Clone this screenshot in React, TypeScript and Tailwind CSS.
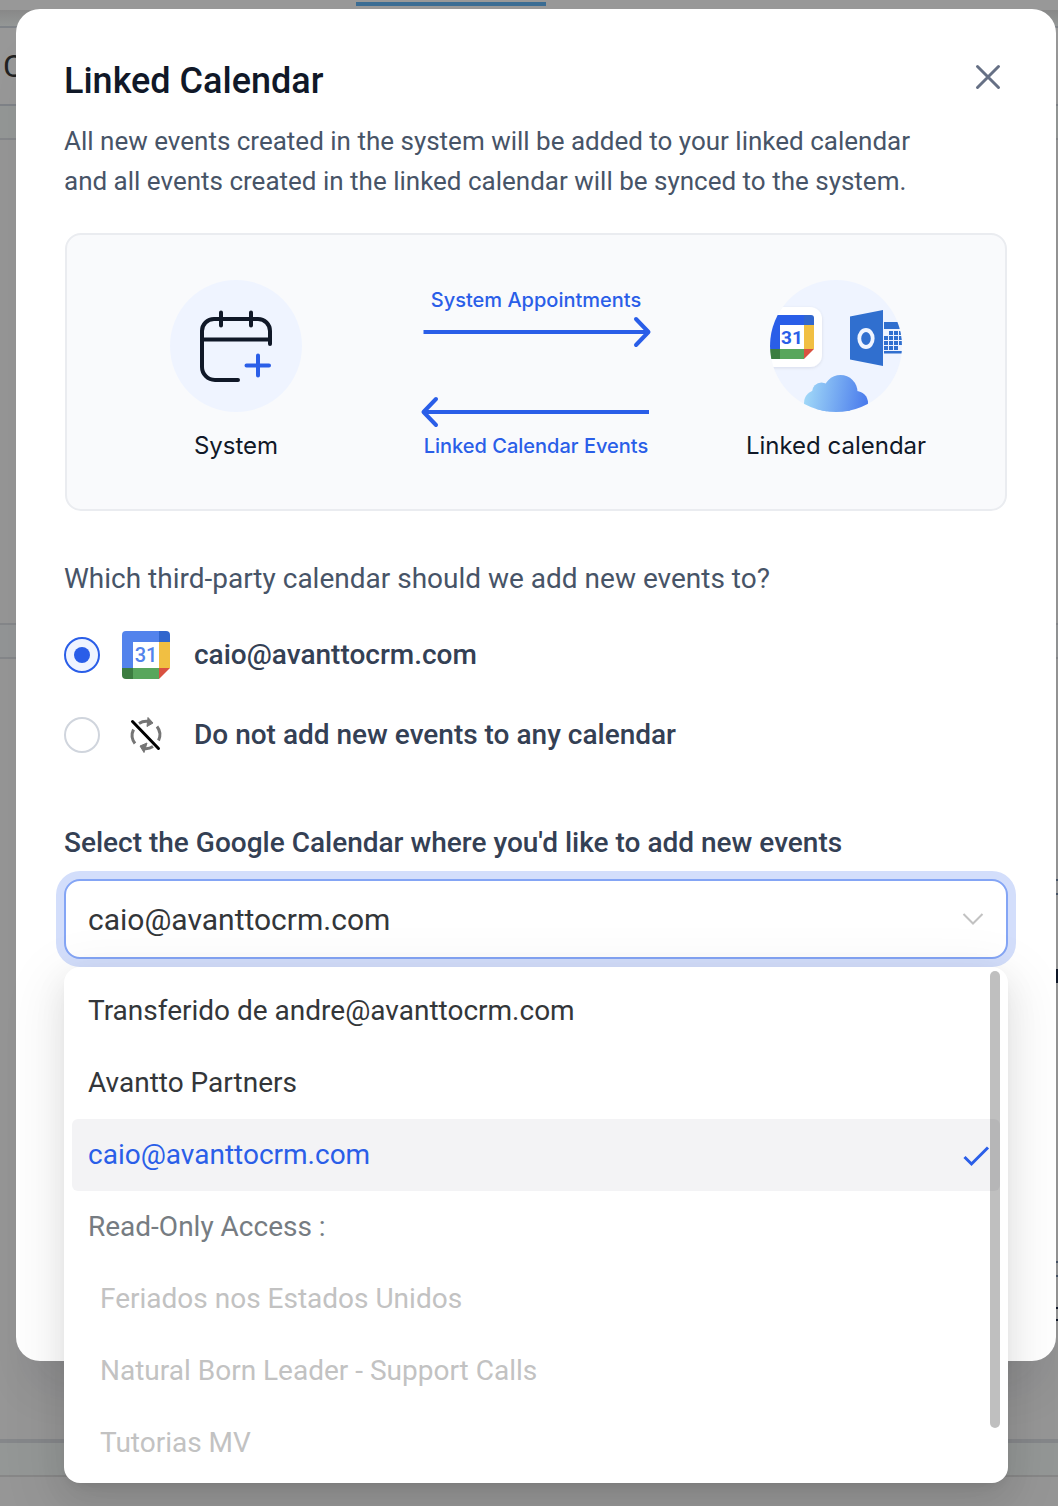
import { useState, type ReactNode } from "react";

const ROBOTO = "font-['Roboto','Liberation_Sans',sans-serif]";

function GoogleCalendarIcon({ className, blue }: { className: string; blue: string }) {
  return (
    <svg viewBox="0 0 48 48" className={className} aria-hidden="true">
      <path d="M4 0H37V11H11V37H0V4a4 4 0 0 1 4-4Z" fill={blue} />
      <path d="M37 0h7a4 4 0 0 1 4 4v7H37Z" fill="#3166cd" />
      <path d="M37 11h11v26H37Z" fill="#f1bf42" />
      <path d="M0 37h11v11H4a4 4 0 0 1-4-4Z" fill="#3c7d40" />
      <path d="M11 37h26v11H11Z" fill="#58a65c" />
      <path d="M37 37h11L37 48Z" fill="#d95140" />
      <path d="M11 11h26v26H11Z" fill="#fff" />
      <text x="24" y="31" textAnchor="middle" fontSize="20" fontWeight="500" fontFamily="Roboto, sans-serif" fill={blue}>
        31
      </text>
    </svg>
  );
}

function SystemCalendarIcon() {
  return (
    <svg viewBox="0 0 132 132" className="size-[132px]" aria-hidden="true" fill="none" strokeLinecap="round">
      <circle cx="66" cy="66" r="66" fill="#eff4ff" />
      <g stroke="#101828" strokeWidth="4">
        <path d="M100 64V51a12 12 0 0 0-12-12H44a12 12 0 0 0-12 12v36a13 13 0 0 0 13 13h23" />
        <path d="M32 59.500h68M51 32.500v13M81 32.500v13" />
      </g>
      <path d="M76.500 85.500H99M88 75.500v20" stroke="#2a5ee8" strokeWidth="4" />
    </svg>
  );
}

function ProvidersIcon() {
  return (
    <svg viewBox="0 0 132 132" className="size-[132px]" aria-hidden="true">
      <defs>
        <clipPath id="providers-clip">
          <circle cx="66" cy="66" r="66" />
        </clipPath>
        <linearGradient id="cloud" x1="34" x2="98" y1="106" y2="116" gradientUnits="userSpaceOnUse">
          <stop stopColor="#a3dbf8" />
          <stop offset="1" stopColor="#4a7bec" />
        </linearGradient>
        <filter id="tile-shadow" x="-20%" y="-20%" width="140%" height="140%">
          <feDropShadow dx="0" dy="1" stdDeviation="1.500" floodColor="#101828" floodOpacity="0.100" />
        </filter>
      </defs>
      <circle cx="66" cy="66" r="66" fill="#eff4ff" />
      <g clipPath="url(#providers-clip)">
        <rect x="-10" y="27" width="62" height="60" rx="12" fill="#fff" filter="url(#tile-shadow)" />
        <path d="M0 35h34v10H10v24H0Z" fill="#2a5ee8" />
        <path d="M34 35h7a3 3 0 0 1 3 3v7H34Z" fill="#3166cd" />
        <path d="M34 45h10v24H34Z" fill="#f1bf42" />
        <path d="M0 69h10v10H0Z" fill="#3c7d40" />
        <path d="M10 69h24v10H10Z" fill="#58a65c" />
        <path d="M34 69h10L34 79Z" fill="#d95140" />
        <text x="22" y="64" textAnchor="middle" fontSize="19" fontWeight="700" fontFamily="Roboto, sans-serif" fill="#2a5ee8">
          31
        </text>
        <path d="M80 36.500 113 30v56l-33-6.500Z" fill="#306fcf" />
        <ellipse cx="96" cy="58.500" rx="6.700" ry="8.500" fill="none" stroke="#eff4ff" strokeWidth="3.800" />
        <path d="M114 42h20v7h-20ZM114 71h20v2.500h-20Z" fill="#306fcf" />
        <g fill="#306fcf">
          <path d="M119 51h4v4h-4ZM124 51h4v4h-4ZM129 51h4v4h-4Z" />
          <path d="M114 56h4v4h-4ZM119 56h4v4h-4ZM124 56h4v4h-4ZM129 56h4v4h-4Z" />
          <path d="M114 61h4v4h-4ZM119 61h4v4h-4ZM124 61h4v4h-4ZM129 61h4v4h-4Z" />
          <path d="M114 66h4v4h-4ZM119 66h4v4h-4ZM124 66h4v4h-4Z" />
        </g>
        <g fill="url(#cloud)">
          <circle cx="70.500" cy="112" r="17" />
          <circle cx="51.500" cy="112" r="9.500" />
          <circle cx="47" cy="123" r="13" />
          <circle cx="86" cy="123" r="12" />
          <path d="M46 112h34v20H46Z" />
        </g>
      </g>
    </svg>
  );
}

function Arrow({ left = false }: { left?: boolean }) {
  return (
    <svg viewBox="0 0 232 32" className="h-8 w-[232px]" aria-hidden="true" fill="none" stroke="#2a5ee8" strokeWidth="4">
      {left ? (
        <>
          <path d="M4 16h225" />
          <path d="M16 3 3.500 16 16 29" strokeLinecap="round" strokeLinejoin="round" />
        </>
      ) : (
        <>
          <path d="M3.500 16H229" />
          <path d="m216 3 12.500 13L216 29" strokeLinecap="round" strokeLinejoin="round" />
        </>
      )}
    </svg>
  );
}

function NoSyncIcon() {
  return (
    <svg viewBox="0 0 48 48" className="size-12" aria-hidden="true" fill="none">
      <g stroke="#757575" strokeWidth="3">
        <path d="M17 12.500A13.500 13.500 0 0 1 27 10.600" />
        <path d="M35 15.500A13.500 13.500 0 0 1 36.500 29.500" />
        <path d="M31 35.500A13.500 13.500 0 0 1 21 37.400" />
        <path d="M13 32.500A13.500 13.500 0 0 1 11.500 18.500" />
      </g>
      <path d="m26 6.500 5 5.500-6 3.500Z" fill="#757575" stroke="#757575" />
      <path d="m22 41.500-4-6.500 7-3Z" fill="#757575" stroke="#757575" />
      <path d="m10.500 10.500 26 27" stroke="#000" strokeWidth="3" strokeLinecap="round" />
    </svg>
  );
}

function Choice({
  label,
  icon,
  checked,
  onChange,
}: {
  label: string;
  icon: ReactNode;
  checked: boolean;
  onChange: () => void;
}) {
  return (
    <label className="flex h-12 cursor-pointer items-center">
      <span className="grid size-9 place-items-center">
        <input
          type="radio"
          name="target"
          checked={checked}
          onChange={onChange}
          className="col-start-1 row-start-1 size-9 appearance-none rounded-full border-2 border-[#d0d5dd] bg-white checked:border-[#2a5ee8] checked:bg-[#eff4ff]"
        />
        {checked && <span className="pointer-events-none z-10 col-start-1 row-start-1 size-4 rounded-full bg-[#2a5ee8]" />}
      </span>
      <span className="ml-[22px]">{icon}</span>
      <span className="ml-6 text-[28px] leading-10 font-medium text-[#344054]">{label}</span>
    </label>
  );
}

function Backdrop() {
  return (
    <div className="absolute inset-0 flex flex-col overflow-hidden bg-[#949796]" aria-hidden="true">
      <div className="h-2.5 shrink-0 bg-[#989898]">
        <div className="ml-[356px] h-1.5 w-[190px] border-b-4 border-[#3a6c93]" />
      </div>
      <div className="h-4 shrink-0 bg-gradient-to-b from-[#888] to-[#949796]" />
      <div className="flex h-20 shrink-0 items-center border-y-2 border-[#7f8388] bg-[#989898] pl-[3px] text-[32px] text-[#222]">C</div>
      <div className="h-8 shrink-0" />
      <div className="h-[487px] shrink-0 border-y-2 border-[#85878a] bg-[#969696]" />
      <div className="h-8 shrink-0 bg-[#939596]" />
      <div className="flex h-[786px] shrink-0 flex-col items-end border-t-2 border-b-4 border-[#85878a] bg-[#969696] pt-[220px]">
        <span className="h-4 w-1 border-y-2 border-[#475467]" />
        <span className="mt-[74px] h-3.5 w-0.5 bg-[#101828]" />
        <span className="mt-[278px] h-4 w-1 border-y-2 border-[#475467]" />
        <span className="mt-[30px] h-3.5 w-0.5 border-y-2 border-[#101828]" />
      </div>
      <div className="h-8 shrink-0" />
      <div className="flex-1 border-t-2 border-[#878787] bg-[#969696]" />
    </div>
  );
}

const WRITABLE = ["Transferido de andre@avanttocrm.com", "Avantto Partners", "caio@avanttocrm.com"];
const READ_ONLY = ["Feriados nos Estados Unidos", "Natural Born Leader - Support Calls", "Tutorias MV"];

export default function App() {
  const [linked, setLinked] = useState(true);
  const [calendar, setCalendar] = useState("caio@avanttocrm.com");

  return (
    <div className={`relative flex min-h-screen flex-col pt-[9px] pr-0.5 pb-[145px] pl-4 ${ROBOTO}`}>
      <Backdrop />
      <main
        role="dialog"
        aria-labelledby="dialog-title"
        className="relative flex-1 rounded-3xl bg-white px-12 pt-12 shadow-[0_40px_48px_-16px_rgba(16,24,40,0.1)]"
      >
        <header className="flex items-start justify-between">
          <div>
            <h1 id="dialog-title" className="text-[36px] leading-12 font-medium text-[#101828]">
              Linked Calendar
            </h1>
            <p className="mt-4 max-w-[870px] text-[26px] leading-10 text-[#475467]">
              All new events created in the system will be added to your linked calendar and all events created in the
              linked calendar will be synced to the system.
            </p>
          </div>
          <button type="button" aria-label="Close" className="size-10">
            <svg viewBox="0 0 40 40" className="size-10" fill="none" stroke="#667085" strokeWidth="3" strokeLinecap="round">
              <path d="m9.500 9.500 21 21M30.500 9.500l-21 21" />
            </svg>
          </button>
        </header>

        <section className="mx-px mt-8 grid grid-cols-3 rounded-2xl border-2 border-[#eaecf0] bg-[#f9fafc] px-[19px] py-[45px] font-['Inter',sans-serif]">
          <div className="flex flex-col items-center">
            <SystemCalendarIcon />
            <p className="mt-4 text-[24px] leading-9 text-[#101828]">System</p>
          </div>
          <div className="flex flex-col items-center text-[20px] leading-7 font-medium text-[#2a5ee8]">
            <p className="mt-1.5 mb-0.5">System Appointments</p>
            <Arrow />
            <span className="h-12" />
            <Arrow left />
            <p className="mt-1">Linked Calendar Events</p>
          </div>
          <div className="flex flex-col items-center">
            <ProvidersIcon />
            <p className="mt-4 text-[24px] leading-9 text-[#101828]">Linked calendar</p>
          </div>
        </section>

        <fieldset className="mt-12">
          <legend className="text-[28px] leading-10 text-[#475467]">
            Which third-party calendar should we add new events to?
          </legend>
          <div className="mt-8 flex flex-col gap-8">
            <Choice
              label="caio@avanttocrm.com"
              icon={<GoogleCalendarIcon className="size-12" blue="#5383ec" />}
              checked={linked}
              onChange={() => setLinked(true)}
            />
            <Choice
              label="Do not add new events to any calendar"
              icon={<NoSyncIcon />}
              checked={!linked}
              onChange={() => setLinked(false)}
            />
          </div>
        </fieldset>

        <label htmlFor="calendar" className="mt-16 block text-[28px] leading-10 font-medium text-[#344054]">
          Select the Google Calendar where you'd like to add new events
        </label>
        <div className="relative mt-4">
          <select
            id="calendar"
            value={calendar}
            onChange={(e) => setCalendar(e.target.value)}
            className="block h-20 w-full appearance-none rounded-2xl border-2 border-[#84a5f5] bg-white px-[22px] text-[30px] text-[#333639] ring-8 ring-[#d3defb] outline-none"
          >
            {WRITABLE.map((name) => (
              <option key={name}>{name}</option>
            ))}
          </select>
          <svg
            viewBox="0 0 24 16"
            className="pointer-events-none absolute top-8 right-[23px] h-4 w-6"
            fill="none"
            stroke="#c2c2c2"
            strokeWidth="2"
            aria-hidden="true"
          >
            <path d="m2.500 3 9.500 9.500L21.500 3" />
          </svg>

          <div className="absolute inset-x-0 top-[88px] rounded-2xl bg-white px-2 py-2 shadow-[0_6px_12px_-8px_rgba(0,0,0,0.16),0_12px_32px_0_rgba(0,0,0,0.08),0_18px_56px_16px_rgba(0,0,0,0.06)]">
            <ul role="listbox" aria-label="Calendars" className="max-h-[500px] overflow-hidden text-[28px] leading-[72px] text-[#333639]">
              {WRITABLE.map((name) => (
                <li key={name} role="option" aria-selected={name === calendar}>
                  <button
                    type="button"
                    onClick={() => setCalendar(name)}
                    className={
                      name === calendar
                        ? "flex h-18 w-full items-center justify-between rounded-md bg-[#f3f3f5] pr-[10px] pl-4 text-[#2a5ee8]"
                        : "flex h-18 w-full items-center justify-between pr-[10px] pl-4"
                    }
                  >
                    {name}
                    {name === calendar && (
                      <svg viewBox="0 0 28 24" className="h-6 w-7" fill="none" stroke="#2a5ee8" strokeWidth="3" aria-hidden="true">
                        <path d="m2.500 14 7 7L26 4.500" />
                      </svg>
                    )}
                  </button>
                </li>
              ))}
              <li className="h-18 px-4 text-[#767c82]">Read-Only Access :</li>
              {READ_ONLY.map((name) => (
                <li key={name} role="option" aria-disabled="true" aria-selected="false" className="h-18 px-7 text-[#c2c2c2]">
                  {name}
                </li>
              ))}
            </ul>
            <div className="absolute top-1 right-2 h-[457px] w-2.5 rounded-full bg-black/25" />
          </div>
        </div>
      </main>
    </div>
  );
}
